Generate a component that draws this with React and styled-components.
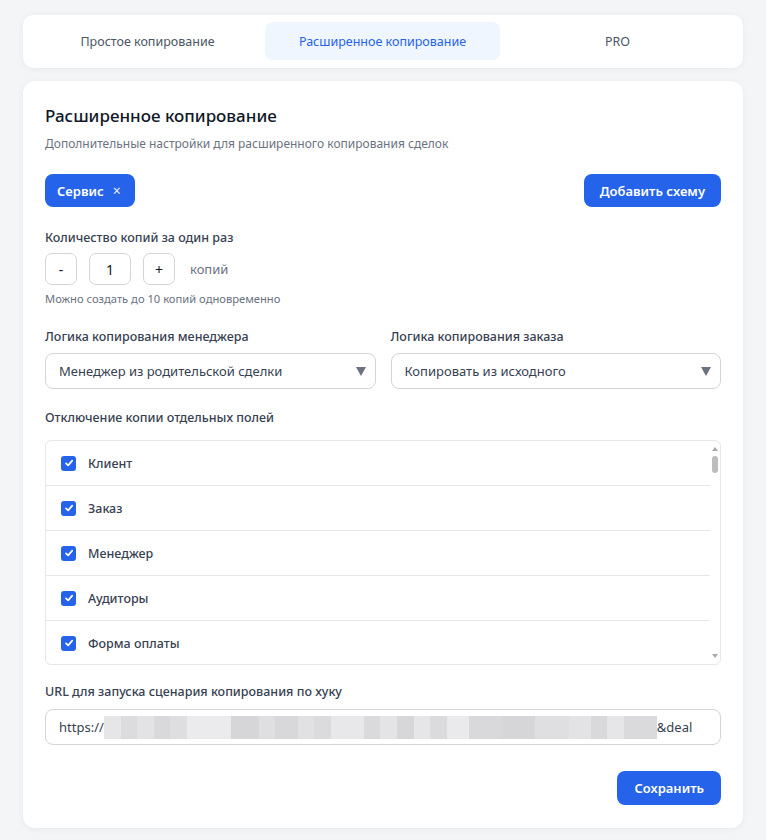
import React, { useState } from 'react'
import styled, { createGlobalStyle } from 'styled-components'

const GlobalStyle = createGlobalStyle`
  body {
    margin: 0;
    background: #f4f5f7;
    font-family: "Noto Sans", "Open Sans", sans-serif;
    color: #111827;
  }
  * { box-sizing: border-box; }
`

const Page = styled.div`
  display: flex;
  flex-direction: column;
  gap: 13px;
  padding: 15px 23px 12px 23px;
`

const Card = styled.div`
  background: #ffffff;
  border-radius: 12px;
  box-shadow: 0 1px 6px rgba(17, 24, 39, 0.06);
`

const TabBar = styled(Card)`
  display: grid;
  grid-template-columns: repeat(3, 1fr);
  padding: 7px 8px 8px 7px;
  border-radius: 10px;
`

const Tab = styled.button`
  height: 38px;
  border: none;
  border-radius: 8px;
  background: ${p => (p.$active ? '#eff6ff' : 'transparent')};
  color: ${p => (p.$active ? '#2563eb' : '#4b5563')};
  font-family: inherit;
  font-size: 12.5px;
  font-weight: 400;
  cursor: pointer;
`

const Panel = styled(Card)`
  padding: 22px 22px 23px;
  display: flex;
  flex-direction: column;
`

const Title = styled.h2`
  margin: 0;
  font-size: 17px;
  font-weight: 500;
  line-height: 26px;
  color: #111827;
`

const Subtitle = styled.p`
  margin: 6px 0 0;
  font-size: 12px;
  line-height: 18px;
  color: #6b7280;
`

const TopRow = styled.div`
  display: flex;
  justify-content: space-between;
  align-items: center;
  margin-top: 21px;
`

const Chip = styled.div`
  display: inline-flex;
  align-items: center;
  gap: 9px;
  height: 33px;
  padding: 0 14px 0 12px;
  border-radius: 8px;
  background: #2563eb;
  color: #ffffff;
  font-size: 13px;
  font-weight: 600;
`

const ChipClose = styled.span`
  font-size: 14px;
  font-weight: 400;
  opacity: 0.9;
`

const PrimaryButton = styled.button`
  height: ${p => p.$h || 33}px;
  padding: 0 ${p => p.$px || 16}px;
  border: none;
  border-radius: 8px;
  background: #2563eb;
  color: #ffffff;
  font-family: inherit;
  font-size: 13px;
  font-weight: 600;
  cursor: pointer;
`

const Label = styled.div`
  margin-top: ${p => p.$mt || 0}px;
  font-size: 12.5px;
  font-weight: 500;
  line-height: 18px;
  color: #374151;
`

const Stepper = styled.div`
  display: flex;
  align-items: center;
  gap: 12px;
  margin-top: 6px;
`

const StepButton = styled.button`
  width: 32px;
  height: 32px;
  border: 1px solid #d1d5db;
  border-radius: 7px;
  background: #ffffff;
  color: #111827;
  font-family: inherit;
  font-size: 14px;
  padding: 0;
`

const CountInput = styled.input`
  width: 42px;
  height: 32px;
  border: 1px solid #d1d5db;
  border-radius: 7px;
  text-align: center;
  font-family: inherit;
  font-size: 14px;
  color: #111827;
`

const Unit = styled.span`
  margin-left: 3px;
  font-size: 13px;
  color: #6b7280;
`

const Hint = styled.div`
  margin-top: 6px;
  font-size: 11.2px;
  line-height: 16px;
  color: #6b7280;
`

const TwoCols = styled.div`
  display: grid;
  grid-template-columns: 1fr 1fr;
  gap: 15px;
  margin-top: 21px;
`

const Field = styled.div`
  display: flex;
  flex-direction: column;
  gap: 7px;
`

const SelectWrap = styled.div`
  position: relative;

  &::after {
    content: '';
    position: absolute;
    right: 10px;
    top: 14px;
    border-left: 5px solid transparent;
    border-right: 5px solid transparent;
    border-top: 9px solid #6b7280;
    pointer-events: none;
  }
`

const Select = styled.select`
  width: 100%;
  height: 36px;
  appearance: none;
  border: 1px solid #d1d5db;
  border-radius: 8px;
  background: #ffffff;
  padding: 0 13px;
  font-family: inherit;
  font-size: 13px;
  color: #374151;
`

const List = styled.div`
  display: flex;
  margin-top: 13px;
  height: 225px;
  border: 1px solid #e5e7eb;
  border-radius: 6px;
  overflow: hidden;
`

const ListBody = styled.div`
  flex: 1;
  overflow: hidden;
`

const ScrollBar = styled.div`
  width: 10px;
  display: flex;
  flex-direction: column;
  align-items: center;
  padding: 3px 0 3px;
  gap: 5px;
`

const Arrow = styled.span`
  width: 0;
  height: 0;
  border-left: 3.5px solid transparent;
  border-right: 3.5px solid transparent;
  ${p => (p.$down ? 'border-top' : 'border-bottom')}: 4px solid #a8a8a8;
  ${p => (p.$down ? 'margin-top: auto; margin-bottom: 3px;' : 'margin-top: 3px;')}
`

const Thumb = styled.span`
  width: 6px;
  height: 17px;
  border-radius: 3px;
  background: #bdbdbd;
`

const Row = styled.label`
  display: flex;
  align-items: center;
  gap: 12px;
  height: 45px;
  padding: 0 15px;
  border-bottom: 1px solid #e5e7eb;
  font-size: 12.5px;
  font-weight: 500;
  color: #374151;
`

const Check = styled.span`
  display: inline-flex;
  align-items: center;
  justify-content: center;
  width: 15px;
  height: 15px;
  border-radius: 3px;
  background: #2563eb;
`

const UrlBox = styled.div`
  display: flex;
  align-items: center;
  height: 36px;
  margin-top: 8px;
  padding: 0 13px;
  border: 1px solid #d1d5db;
  border-radius: 8px;
  font-size: 13px;
  color: #374151;
  white-space: nowrap;
  overflow: hidden;
`

const Redacted = styled.span`
  display: inline-block;
  width: 553px;
  height: 23px;
  background: linear-gradient(
    90deg,
    #e6e6e8 0 3%, #dcdcdf 3% 6%, #e3e3e5 6% 9%, #d9d9dc 9% 12%, #dedee1 12% 15%,
    #ebebed 15% 23%, #d6d6d9 23% 28%, #dfdfe2 28% 31%, #d8d8db 31% 35%, #e1e1e4 35% 38%,
    #dbdbde 38% 41%, #e8e8ea 41% 47%, #dadadd 47% 50%, #e4e4e6 50% 53%, #d7d7da 53% 56%,
    #e6e6e8 56% 59%, #dbdbde 59% 62%, #eaeaec 62% 66%, #d9d9dc 66% 72%, #d6d6d9 72% 78%,
    #dfdfe2 78% 84%, #e3e3e5 84% 88%, #d9d9dc 88% 91%, #e6e6e8 91% 94%, #dadadd 94% 100%
  );
`

const Footer = styled.div`
  display: flex;
  justify-content: flex-end;
  margin-top: 26px;
`

const fields = ['Клиент', 'Заказ', 'Менеджер', 'Аудиторы', 'Форма оплаты']

function CheckIcon() {
  return (
    <svg width="10" height="10" viewBox="0 0 10 10">
      <path d="M2 5.3 L4.2 7.4 L8.2 2.6" fill="none" stroke="#fff" strokeWidth="1.7" strokeLinecap="round" strokeLinejoin="round" />
    </svg>
  )
}

export default function App() {
  const [count, setCount] = useState(1)

  return (
    <>
      <GlobalStyle />
      <Page>
        <TabBar>
          <Tab>Простое копирование</Tab>
          <Tab $active>Расширенное копирование</Tab>
          <Tab>PRO</Tab>
        </TabBar>

        <Panel>
          <Title>Расширенное копирование</Title>
          <Subtitle>Дополнительные настройки для расширенного копирования сделок</Subtitle>

          <TopRow>
            <Chip>
              Сервис <ChipClose>×</ChipClose>
            </Chip>
            <PrimaryButton>Добавить схему</PrimaryButton>
          </TopRow>

          <Label $mt={22}>Количество копий за один раз</Label>
          <Stepper>
            <StepButton onClick={() => setCount(c => Math.max(1, c - 1))}>-</StepButton>
            <CountInput value={count} readOnly />
            <StepButton onClick={() => setCount(c => Math.min(10, c + 1))}>+</StepButton>
            <Unit>копий</Unit>
          </Stepper>
          <Hint>Можно создать до 10 копий одновременно</Hint>

          <TwoCols>
            <Field>
              <Label>Логика копирования менеджера</Label>
              <SelectWrap>
                <Select defaultValue="parent">
                  <option value="parent">Менеджер из родительской сделки</option>
                </Select>
              </SelectWrap>
            </Field>
            <Field>
              <Label>Логика копирования заказа</Label>
              <SelectWrap>
                <Select defaultValue="source">
                  <option value="source">Копировать из исходного</option>
                </Select>
              </SelectWrap>
            </Field>
          </TwoCols>

          <Label $mt={20}>Отключение копии отдельных полей</Label>
          <List>
            <ListBody>
              {fields.map(f => (
                <Row key={f}>
                  <Check><CheckIcon /></Check>
                  {f}
                </Row>
              ))}
            </ListBody>
            <ScrollBar>
              <Arrow />
              <Thumb />
              <Arrow $down />
            </ScrollBar>
          </List>

          <Label $mt={18}>URL для запуска сценария копирования по хуку</Label>
          <UrlBox>
            https://<Redacted />&amp;deal
          </UrlBox>

          <Footer>
            <PrimaryButton $h={34} $px={17}>Сохранить</PrimaryButton>
          </Footer>
        </Panel>
      </Page>
    </>
  )
}
